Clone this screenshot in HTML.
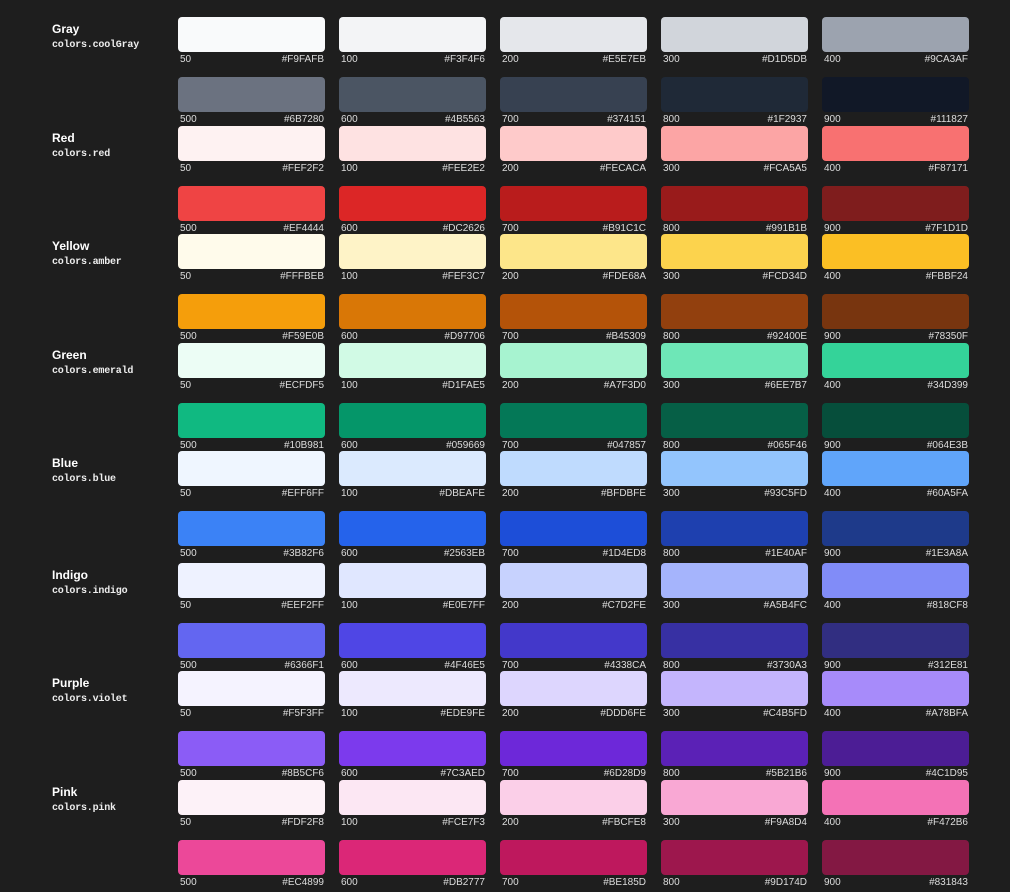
<!DOCTYPE html><html><head><meta charset="utf-8"><style>
body{margin:0;background:#1e1e1e;width:1010px;height:892px;overflow:hidden;font-family:"Liberation Sans",sans-serif;color:#e5e5e5;position:relative}
.g{position:absolute;left:0;width:1010px;height:110px}
.t{position:absolute;left:52px;top:5px;font-weight:bold;font-size:12px;color:#fff}
.m{position:absolute;left:52px;top:23px;font-family:"Liberation Mono",monospace;font-size:10px;color:#eee;font-weight:bold;letter-spacing:-0.2px}
.r{position:absolute;left:178px;display:flex;gap:14px}
.r2{top:60px}.r1{top:0}
.c{width:147px}
.s{height:35px;border-radius:4px}
.l{display:flex;justify-content:space-between;font-size:10px;line-height:12px;margin-top:2px;padding:0 1px 0 2px;color:#ddd}
</style></head><body>

<div class="g" style="top:17px"><div class="t">Gray</div><div class="m">colors.coolGray</div>
<div class="r r1"><div class="c"><div class="s" style="background:#F9FAFB"></div><div class="l"><span>50</span><span>#F9FAFB</span></div></div><div class="c"><div class="s" style="background:#F3F4F6"></div><div class="l"><span>100</span><span>#F3F4F6</span></div></div><div class="c"><div class="s" style="background:#E5E7EB"></div><div class="l"><span>200</span><span>#E5E7EB</span></div></div><div class="c"><div class="s" style="background:#D1D5DB"></div><div class="l"><span>300</span><span>#D1D5DB</span></div></div><div class="c"><div class="s" style="background:#9CA3AF"></div><div class="l"><span>400</span><span>#9CA3AF</span></div></div></div>
<div class="r r2"><div class="c"><div class="s" style="background:#6B7280"></div><div class="l"><span>500</span><span>#6B7280</span></div></div><div class="c"><div class="s" style="background:#4B5563"></div><div class="l"><span>600</span><span>#4B5563</span></div></div><div class="c"><div class="s" style="background:#374151"></div><div class="l"><span>700</span><span>#374151</span></div></div><div class="c"><div class="s" style="background:#1F2937"></div><div class="l"><span>800</span><span>#1F2937</span></div></div><div class="c"><div class="s" style="background:#111827"></div><div class="l"><span>900</span><span>#111827</span></div></div></div></div>

<div class="g" style="top:126px"><div class="t">Red</div><div class="m">colors.red</div>
<div class="r r1"><div class="c"><div class="s" style="background:#FEF2F2"></div><div class="l"><span>50</span><span>#FEF2F2</span></div></div><div class="c"><div class="s" style="background:#FEE2E2"></div><div class="l"><span>100</span><span>#FEE2E2</span></div></div><div class="c"><div class="s" style="background:#FECACA"></div><div class="l"><span>200</span><span>#FECACA</span></div></div><div class="c"><div class="s" style="background:#FCA5A5"></div><div class="l"><span>300</span><span>#FCA5A5</span></div></div><div class="c"><div class="s" style="background:#F87171"></div><div class="l"><span>400</span><span>#F87171</span></div></div></div>
<div class="r r2"><div class="c"><div class="s" style="background:#EF4444"></div><div class="l"><span>500</span><span>#EF4444</span></div></div><div class="c"><div class="s" style="background:#DC2626"></div><div class="l"><span>600</span><span>#DC2626</span></div></div><div class="c"><div class="s" style="background:#B91C1C"></div><div class="l"><span>700</span><span>#B91C1C</span></div></div><div class="c"><div class="s" style="background:#991B1B"></div><div class="l"><span>800</span><span>#991B1B</span></div></div><div class="c"><div class="s" style="background:#7F1D1D"></div><div class="l"><span>900</span><span>#7F1D1D</span></div></div></div></div>

<div class="g" style="top:234px"><div class="t">Yellow</div><div class="m">colors.amber</div>
<div class="r r1"><div class="c"><div class="s" style="background:#FFFBEB"></div><div class="l"><span>50</span><span>#FFFBEB</span></div></div><div class="c"><div class="s" style="background:#FEF3C7"></div><div class="l"><span>100</span><span>#FEF3C7</span></div></div><div class="c"><div class="s" style="background:#FDE68A"></div><div class="l"><span>200</span><span>#FDE68A</span></div></div><div class="c"><div class="s" style="background:#FCD34D"></div><div class="l"><span>300</span><span>#FCD34D</span></div></div><div class="c"><div class="s" style="background:#FBBF24"></div><div class="l"><span>400</span><span>#FBBF24</span></div></div></div>
<div class="r r2"><div class="c"><div class="s" style="background:#F59E0B"></div><div class="l"><span>500</span><span>#F59E0B</span></div></div><div class="c"><div class="s" style="background:#D97706"></div><div class="l"><span>600</span><span>#D97706</span></div></div><div class="c"><div class="s" style="background:#B45309"></div><div class="l"><span>700</span><span>#B45309</span></div></div><div class="c"><div class="s" style="background:#92400E"></div><div class="l"><span>800</span><span>#92400E</span></div></div><div class="c"><div class="s" style="background:#78350F"></div><div class="l"><span>900</span><span>#78350F</span></div></div></div></div>

<div class="g" style="top:343px"><div class="t">Green</div><div class="m">colors.emerald</div>
<div class="r r1"><div class="c"><div class="s" style="background:#ECFDF5"></div><div class="l"><span>50</span><span>#ECFDF5</span></div></div><div class="c"><div class="s" style="background:#D1FAE5"></div><div class="l"><span>100</span><span>#D1FAE5</span></div></div><div class="c"><div class="s" style="background:#A7F3D0"></div><div class="l"><span>200</span><span>#A7F3D0</span></div></div><div class="c"><div class="s" style="background:#6EE7B7"></div><div class="l"><span>300</span><span>#6EE7B7</span></div></div><div class="c"><div class="s" style="background:#34D399"></div><div class="l"><span>400</span><span>#34D399</span></div></div></div>
<div class="r r2"><div class="c"><div class="s" style="background:#10B981"></div><div class="l"><span>500</span><span>#10B981</span></div></div><div class="c"><div class="s" style="background:#059669"></div><div class="l"><span>600</span><span>#059669</span></div></div><div class="c"><div class="s" style="background:#047857"></div><div class="l"><span>700</span><span>#047857</span></div></div><div class="c"><div class="s" style="background:#065F46"></div><div class="l"><span>800</span><span>#065F46</span></div></div><div class="c"><div class="s" style="background:#064E3B"></div><div class="l"><span>900</span><span>#064E3B</span></div></div></div></div>

<div class="g" style="top:451px"><div class="t">Blue</div><div class="m">colors.blue</div>
<div class="r r1"><div class="c"><div class="s" style="background:#EFF6FF"></div><div class="l"><span>50</span><span>#EFF6FF</span></div></div><div class="c"><div class="s" style="background:#DBEAFE"></div><div class="l"><span>100</span><span>#DBEAFE</span></div></div><div class="c"><div class="s" style="background:#BFDBFE"></div><div class="l"><span>200</span><span>#BFDBFE</span></div></div><div class="c"><div class="s" style="background:#93C5FD"></div><div class="l"><span>300</span><span>#93C5FD</span></div></div><div class="c"><div class="s" style="background:#60A5FA"></div><div class="l"><span>400</span><span>#60A5FA</span></div></div></div>
<div class="r r2"><div class="c"><div class="s" style="background:#3B82F6"></div><div class="l"><span>500</span><span>#3B82F6</span></div></div><div class="c"><div class="s" style="background:#2563EB"></div><div class="l"><span>600</span><span>#2563EB</span></div></div><div class="c"><div class="s" style="background:#1D4ED8"></div><div class="l"><span>700</span><span>#1D4ED8</span></div></div><div class="c"><div class="s" style="background:#1E40AF"></div><div class="l"><span>800</span><span>#1E40AF</span></div></div><div class="c"><div class="s" style="background:#1E3A8A"></div><div class="l"><span>900</span><span>#1E3A8A</span></div></div></div></div>

<div class="g" style="top:563px"><div class="t">Indigo</div><div class="m">colors.indigo</div>
<div class="r r1"><div class="c"><div class="s" style="background:#EEF2FF"></div><div class="l"><span>50</span><span>#EEF2FF</span></div></div><div class="c"><div class="s" style="background:#E0E7FF"></div><div class="l"><span>100</span><span>#E0E7FF</span></div></div><div class="c"><div class="s" style="background:#C7D2FE"></div><div class="l"><span>200</span><span>#C7D2FE</span></div></div><div class="c"><div class="s" style="background:#A5B4FC"></div><div class="l"><span>300</span><span>#A5B4FC</span></div></div><div class="c"><div class="s" style="background:#818CF8"></div><div class="l"><span>400</span><span>#818CF8</span></div></div></div>
<div class="r r2"><div class="c"><div class="s" style="background:#6366F1"></div><div class="l"><span>500</span><span>#6366F1</span></div></div><div class="c"><div class="s" style="background:#4F46E5"></div><div class="l"><span>600</span><span>#4F46E5</span></div></div><div class="c"><div class="s" style="background:#4338CA"></div><div class="l"><span>700</span><span>#4338CA</span></div></div><div class="c"><div class="s" style="background:#3730A3"></div><div class="l"><span>800</span><span>#3730A3</span></div></div><div class="c"><div class="s" style="background:#312E81"></div><div class="l"><span>900</span><span>#312E81</span></div></div></div></div>

<div class="g" style="top:671px"><div class="t">Purple</div><div class="m">colors.violet</div>
<div class="r r1"><div class="c"><div class="s" style="background:#F5F3FF"></div><div class="l"><span>50</span><span>#F5F3FF</span></div></div><div class="c"><div class="s" style="background:#EDE9FE"></div><div class="l"><span>100</span><span>#EDE9FE</span></div></div><div class="c"><div class="s" style="background:#DDD6FE"></div><div class="l"><span>200</span><span>#DDD6FE</span></div></div><div class="c"><div class="s" style="background:#C4B5FD"></div><div class="l"><span>300</span><span>#C4B5FD</span></div></div><div class="c"><div class="s" style="background:#A78BFA"></div><div class="l"><span>400</span><span>#A78BFA</span></div></div></div>
<div class="r r2"><div class="c"><div class="s" style="background:#8B5CF6"></div><div class="l"><span>500</span><span>#8B5CF6</span></div></div><div class="c"><div class="s" style="background:#7C3AED"></div><div class="l"><span>600</span><span>#7C3AED</span></div></div><div class="c"><div class="s" style="background:#6D28D9"></div><div class="l"><span>700</span><span>#6D28D9</span></div></div><div class="c"><div class="s" style="background:#5B21B6"></div><div class="l"><span>800</span><span>#5B21B6</span></div></div><div class="c"><div class="s" style="background:#4C1D95"></div><div class="l"><span>900</span><span>#4C1D95</span></div></div></div></div>

<div class="g" style="top:780px"><div class="t">Pink</div><div class="m">colors.pink</div>
<div class="r r1"><div class="c"><div class="s" style="background:#FDF2F8"></div><div class="l"><span>50</span><span>#FDF2F8</span></div></div><div class="c"><div class="s" style="background:#FCE7F3"></div><div class="l"><span>100</span><span>#FCE7F3</span></div></div><div class="c"><div class="s" style="background:#FBCFE8"></div><div class="l"><span>200</span><span>#FBCFE8</span></div></div><div class="c"><div class="s" style="background:#F9A8D4"></div><div class="l"><span>300</span><span>#F9A8D4</span></div></div><div class="c"><div class="s" style="background:#F472B6"></div><div class="l"><span>400</span><span>#F472B6</span></div></div></div>
<div class="r r2"><div class="c"><div class="s" style="background:#EC4899"></div><div class="l"><span>500</span><span>#EC4899</span></div></div><div class="c"><div class="s" style="background:#DB2777"></div><div class="l"><span>600</span><span>#DB2777</span></div></div><div class="c"><div class="s" style="background:#BE185D"></div><div class="l"><span>700</span><span>#BE185D</span></div></div><div class="c"><div class="s" style="background:#9D174D"></div><div class="l"><span>800</span><span>#9D174D</span></div></div><div class="c"><div class="s" style="background:#831843"></div><div class="l"><span>900</span><span>#831843</span></div></div></div></div>

</body></html>
